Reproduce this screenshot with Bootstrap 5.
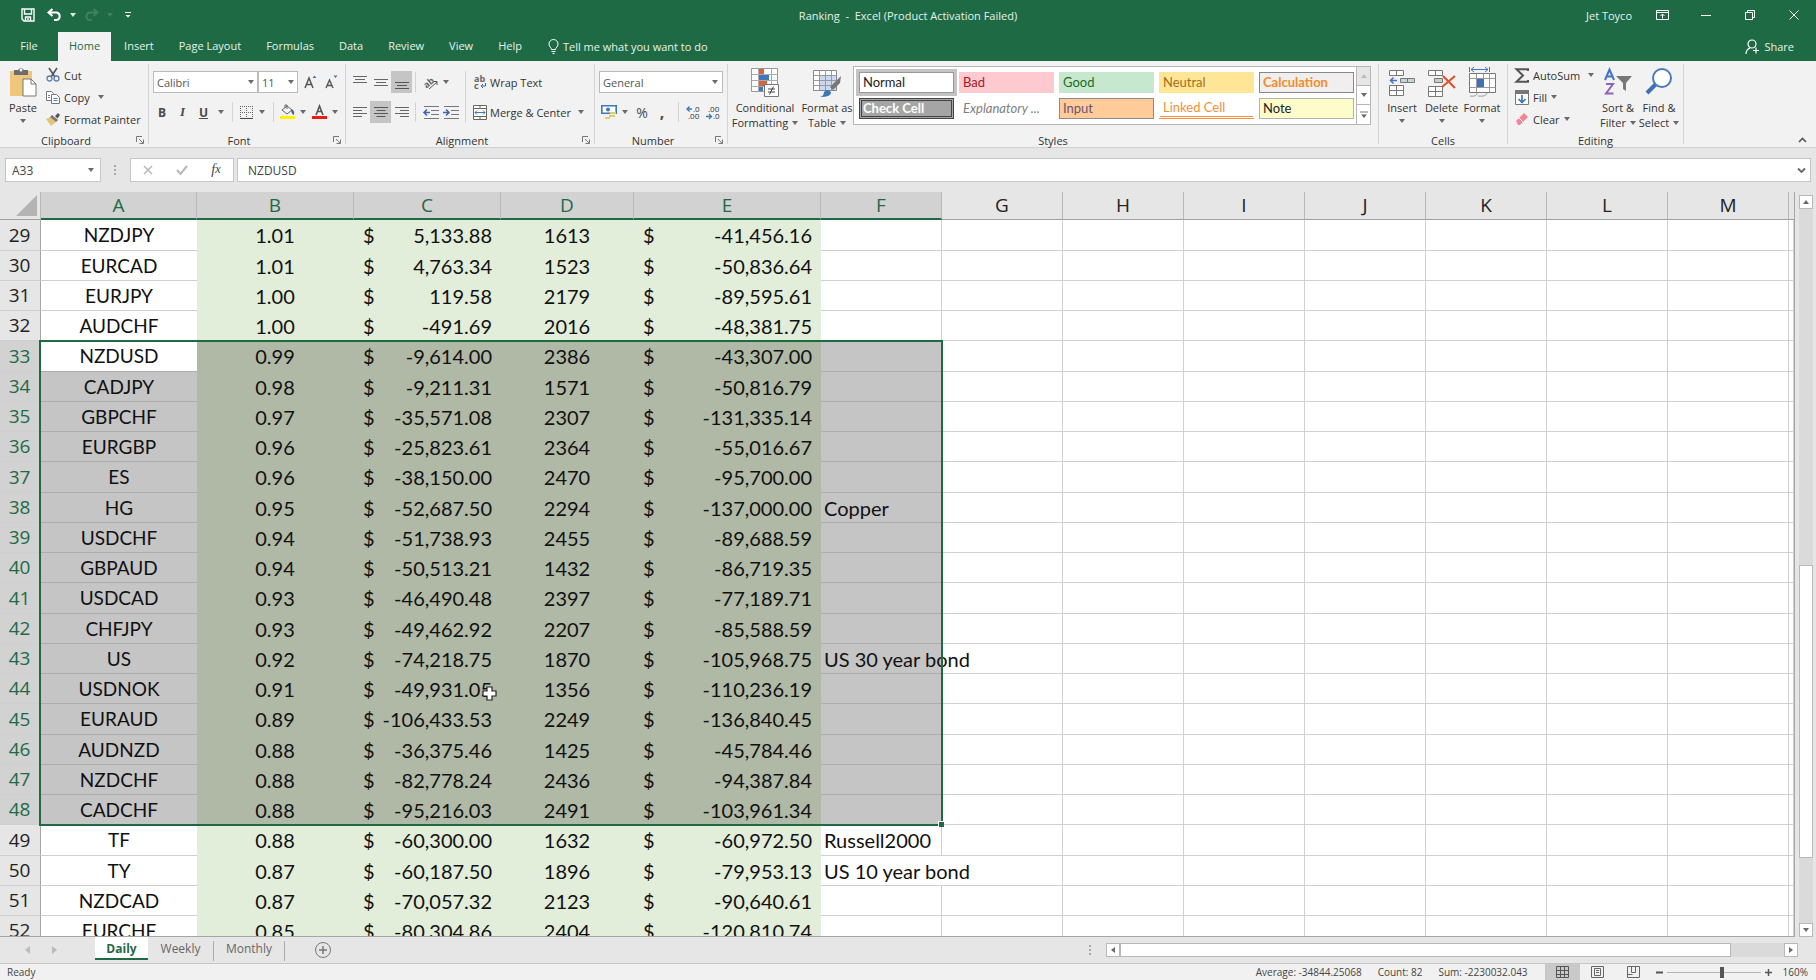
<!DOCTYPE html>
<html lang="en">
<head>
<meta charset="utf-8">
<meta name="viewport" content="width=device-width, initial-scale=1">
<title>Ranking - Excel</title>
<link rel="stylesheet" href="https://cdn.jsdelivr.net/npm/bootstrap@5.3.0/dist/css/bootstrap.min.css">
<style>
:root{--xl:#1e6a45;--line:#c6c6c6;--ribbon:#f2f2f2;--chrome:#e6e6e6;--grid:#d0d0d0}
body{font-family:"Open Sans","Noto Sans",sans-serif;font-size:11px;line-height:15px;color:#333;background:var(--chrome)}
body>*{flex-shrink:0}
button,input,select{font:inherit;color:inherit}
button{background:none;border:0;padding:0}
svg{display:block;flex:none;overflow:visible}
.caret{width:0;height:0;border:3px solid transparent;border-top:4px solid #6a6a6a;border-bottom:0;flex:none}
/* title bar */
.titlebar{background:var(--xl);color:#e6f2eb;display:grid;grid-template-columns:1fr auto 1fr;height:32px;padding-bottom:2px}
.titlebar button{height:30px}
.winbtn{width:44px}
.menu{background:var(--xl);color:#e6f2eb;height:29px}
.menu .tab{padding:0 12px 0 13px;height:29px;color:#e6f2eb;text-decoration:none;line-height:28px}
.menu .tab.active{background:var(--ribbon);color:var(--xl);padding:0 11px}
.menu .tab.file{width:58px;padding:0;text-align:center}
/* ribbon */
.ribbon{background:var(--ribbon);height:87px;border-bottom:1px solid #d0d0d0;padding-top:3px}
.group{position:relative;height:80px;border-right:1px solid #d4d4d4}
.group-body{height:66px}
.group-name{height:18px;line-height:22px;text-align:center;color:#333}
.launch{position:absolute;right:4px;bottom:0}
.rowbtn{height:22px;gap:4px}
.tool{height:22px;flex:none;color:#4a4a4a}
.tool.on{background:#c5c5c5}
.tool.label{color:#333}
.vsep{width:1px;height:20px;background:#d4d4d4;flex:none}
.combo{position:relative}
.combo select,.combo input{appearance:none;width:100%;height:22px;border:1px solid #bbb;border-radius:0;background:#fff;padding:0 3px;display:block;color:#555}
.combo .caret{position:absolute;right:4px;top:9px;pointer-events:none}
.big{display:flex;flex-direction:column;align-items:center;white-space:nowrap;padding-top:3px}
.big svg{margin-bottom:3px}
.big .caret{margin-top:4px}
.gallery{border:1px solid #b6b6b6;background:#fff;height:59px;width:518px;margin-top:2px}
.swatches{display:grid;grid-template-columns:repeat(5,95px);gap:5px;padding:5px 1px 0 5px;grid-auto-rows:21px}
.swatch{font-family:Lato,sans-serif;font-size:13px;line-height:19px;text-align:left;padding:0 3px;border:1px solid transparent;white-space:nowrap;color:#222}
.gstrip{width:14px;border-left:1px solid #b6b6b6}
.gstrip button{height:19px;width:13px;display:flex;justify-content:center;align-items:center;border-bottom:1px solid #b6b6b6}
/* formula bar */
.fbar{padding:10px 5px;height:44px;font-size:12px;color:#444}
.fbox{background:#fff;border:1px solid var(--line);height:24px}
.fbox input{border:0;outline:0;background:none;padding:0 6px;min-width:0;width:100%}
.fbox.acts button{flex:1;display:flex;justify-content:center}
/* sheet */
.work{flex:1 1 0;min-height:0}
.sheet{min-height:0;background:#fff;border-right:1px solid #a6a6a6;border-bottom:1px solid #a6a6a6;overflow:hidden;position:relative}
.cells{table-layout:fixed;width:100%;border-collapse:separate;border-spacing:0;font-size:19px}
.cells th{font-weight:400;text-align:center;padding:0;line-height:27px;color:#222;background:var(--chrome)}
.cells thead th{height:28px;border-right:1px solid #b8b8b8;border-bottom:1px solid #a0a0a0}
.cells thead th.hit{background:#d2d2d2;color:var(--xl);border-bottom:2px solid var(--xl);line-height:26px}
.cells tbody th{border-right:1px solid #a6a6a6;border-bottom:1px solid #cfcfcf;padding-right:1px}
.cells tr.in th{background:#d2d2d2;color:var(--xl)}
.cells tbody tr{height:30px}
.cells tbody tr:nth-child(4n+1){height:31px}
.cells td{font-family:Lato,sans-serif;font-size:20px;padding:0;line-height:28px;color:#111;border-right:1px solid var(--grid);border-bottom:1px solid var(--grid);white-space:nowrap;background:#fff}
.cells td.free{background:none}
.cells td.name{text-align:center;border-right:0;font-size:19px}
.cells td.fill{background:#e2edda;border-color:#e2edda;text-align:center}
.cells td.money div{padding:0 8px 0 9px}
.cells td.note{padding-left:3px;overflow:visible;position:relative}
.cells td.spill{border-right-color:transparent}
.cells tr.in td.fill{background:#b0b8a6;border-color:#b0b8a6}
.cells tr.in td.name,.cells tr.in td.note{background:#c5c5c5;border-color:#adadad}
.cells tr.in td.name.active{background:#fff}
.range{position:absolute;left:39px;top:148px;width:904px;height:486px;border:2px solid var(--xl);z-index:3;pointer-events:none}
.range i{position:absolute;right:-3px;bottom:-3px;width:6px;height:6px;background:var(--xl);border:1px solid #fff;border-width:1px 0 0 1px}
.pointer{position:absolute;left:482px;top:494px;z-index:4}
.corner svg{margin-left:16px}
/* scroll bars and sheet tabs */
.sbtn{width:14px;height:14px;background:#fff;border:1px solid #b8b8b8;display:flex;align-items:center;justify-content:center;flex:none}
.track{background:#dadada;display:flex}
.thumb{background:#fff;border:1px solid #b8b8b8}
.tabs{height:27px;font-size:12px;border-bottom:1px solid var(--line);color:#555}
.tabs .sheet-tab{height:23px;line-height:23px;text-align:center;color:#666;text-decoration:none}
.tabs .sheet-tab.active{background:#fff;color:var(--xl);font-weight:700;border-bottom:2px solid var(--xl)}
.status{height:16px;background:#f1f1f1;color:#444;font-size:10px}
.zoomer{appearance:none;width:94px;height:14px;background:linear-gradient(#b5b5b5,#b5b5b5) center/100% 1px no-repeat;margin:0}
.zoomer::-webkit-slider-thumb{appearance:none;width:4px;height:11px;background:#555}
</style>
</head>
<body class="vh-100 d-flex flex-column overflow-hidden">

<svg width="0" height="0" class="position-absolute" aria-hidden="true"><defs>
<symbol id="launch" viewBox="0 0 8 8"><path d="M.5 6V.5H6M3 3l4 4M7.500 3.500v4h-4" fill="none" stroke="#777"/></symbol>
</defs></svg>

<header class="titlebar">
  <div class="d-flex align-items-center">
    <button style="margin-left:21px" aria-label="Save"><svg width="14" height="14" viewBox="0 0 14 14" fill="none" stroke="#fff" stroke-width="1.400"><path d="M1 1h12v12H3L1 11zM3.500 1v5h7V1M4.500 13V9h5v4M7 10v2"/></svg></button>
    <button class="d-flex align-items-center gap-2" style="margin-left:12px" aria-label="Undo"><svg width="15" height="14" viewBox="0 0 15 14" fill="none" stroke="#fff" stroke-width="2"><path d="M5.500 1 1.500 4.500l4 3.500M2 4.500h7.500a3.800 3.800 0 0 1 0 7.500H7"/></svg><span class="caret" style="border-top-color:#dcebe2"></span></button>
    <button class="d-flex align-items-center gap-2" style="margin-left:8px" aria-label="Redo"><svg width="15" height="14" viewBox="0 0 15 14" fill="none" stroke="#3f8060" stroke-width="2"><path d="m9.500 1 4 3.500-4 3.500M13 4.500H5.500a3.800 3.800 0 0 0 0 7.500H8"/></svg><span class="caret" style="border-top-color:#3f8060"></span></button>
    <button style="margin-left:11px" aria-label="Customize Quick Access Toolbar"><svg width="8" height="8" viewBox="0 0 8 8"><path d="M1 1.500h6" stroke="#fff"/><path d="M1.500 4h5L4 6.500z" fill="#fff"/></svg></button>
  </div>
  <div class="d-flex align-items-center" style="white-space:pre">Ranking  -  Excel (Product Activation Failed)</div>
  <div class="d-flex align-items-center justify-content-end">
    <span class="me-2">Jet Toyco</span>
    <button class="winbtn" aria-label="Ribbon display"><svg class="mx-auto" width="13" height="10" viewBox="0 0 13 10" fill="none" stroke="#fff"><path d="M.5.5h12v9H.5zM.5 2.500h12M6.500 8.500v-4M4.500 6l2-2 2 2"/></svg></button>
    <button class="winbtn" aria-label="Minimize"><svg class="mx-auto" width="10" height="10" viewBox="0 0 10 10"><path d="M0 5.500h10" stroke="#fff"/></svg></button>
    <button class="winbtn" aria-label="Restore"><svg class="mx-auto" width="10" height="10" viewBox="0 0 10 10" fill="none" stroke="#fff"><path d="M.5 2.500h7v7h-7zM2.500 2.500v-2h7v7h-2"/></svg></button>
    <button class="winbtn" aria-label="Close"><svg class="mx-auto" width="10" height="10" viewBox="0 0 10 10"><path d="m.5.5 9 9m0-9-9 9" stroke="#fff"/></svg></button>
  </div>
</header>

<nav class="menu d-flex">
  <a href="#" class="tab file">File</a>
  <a href="#" class="tab active">Home</a>
  <a href="#" class="tab">Insert</a><a href="#" class="tab">Page Layout</a><a href="#" class="tab">Formulas</a><a href="#" class="tab">Data</a><a href="#" class="tab">Review</a><a href="#" class="tab">View</a><a href="#" class="tab">Help</a>
  <button class="d-flex align-items-center gap-1" style="margin-left:14px"><svg width="11" height="15" viewBox="0 0 11 15" fill="none" stroke="#fff"><path d="M3.500 10.500c0-2-2.500-2.500-2.500-5.500a4.500 4.500 0 0 1 9 0c0 3-2.500 3.500-2.500 5.500zM3.500 12.500h4M4.500 14.500h2"/></svg>Tell me what you want to do</button>
  <button class="d-flex align-items-center gap-1 ms-auto" style="padding-right:22px"><svg width="15" height="15" viewBox="0 0 15 15" fill="none" stroke="#fff" stroke-width="1.200"><circle cx="7" cy="5" r="4"/><path d="M1 15c0-3 1.500-5 4-6M8 11.500h6M11 8.500v6"/></svg>Share</button>
</nav>

<section class="ribbon d-flex">
  <div class="group" style="width:149px">
    <div class="group-body d-flex">
      <button class="big" style="width:46px"><svg width="28" height="30" viewBox="0 0 28 30"><path d="M1 4h22v25H1z" fill="#efc77c"/><path d="M5 3h4a3.500 3.500 0 0 1 6 0h4v5H5z" fill="#6d6d6d"/><circle cx="12" cy="3" r="1.500" fill="#f2f2f2"/><path d="M14 12h8l5 5v12H14z" fill="#fff" stroke="#777"/><path d="M22 12v5h5" fill="none" stroke="#777"/></svg>Paste<span class="caret"></span></button>
      <div>
        <button class="rowbtn d-flex align-items-center"><svg width="14" height="14" viewBox="0 0 14 14" fill="none"><path d="m3 0 6 9M11 0 5 9" stroke="#555" stroke-width="1.600"/><circle cx="3.500" cy="10.500" r="2.500" stroke="#5b7fb5" stroke-width="1.300"/><circle cx="10.500" cy="10.500" r="2.500" stroke="#5b7fb5" stroke-width="1.300"/></svg>Cut</button>
        <button class="rowbtn d-flex align-items-center"><svg width="14" height="13" viewBox="0 0 14 13" fill="#fff" stroke="#777"><path d="M.5.5h5l2 2v7h-7z"/><path d="M5.500 3.500h5l3 3v6h-8z"/><path d="M2 4.500h2M2 6.500h2M7.500 7.500h4M7.500 9.500h4" stroke="#5b7fb5"/></svg>Copy<span class="caret ms-1"></span></button>
        <button class="rowbtn d-flex align-items-center"><svg width="14" height="13" viewBox="0 0 14 13"><path d="M0 6 4 4l6 5-5 4z" fill="#e6c477"/><path d="m4 4 2-2 6 5-2 2z" fill="#777"/><path d="m9 3 3-3 2 2-2.500 3.500z" fill="#555"/></svg>Format Painter</button>
      </div>
    </div>
    <div class="group-name" style="padding-right:16px">Clipboard</div>
    <button class="launch" aria-label="Clipboard settings"><svg width="8" height="8"><use href="#launch"/></svg></button>
  </div>

  <div class="group" style="width:197px">
    <div class="group-body" style="padding:7px 0 0 4px">
      <div class="d-flex align-items-center">
        <div class="combo" style="width:105px"><select aria-label="Font"><option>Calibri</option></select><span class="caret"></span></div>
        <div class="combo" style="width:40px"><select aria-label="Font size"><option>11</option></select><span class="caret"></span></div>
        <button class="tool" style="margin-left:6px" aria-label="Increase font size"><svg width="13" height="14" viewBox="0 0 13 14"><path d="M1 13 5 3l4 10M2.500 9.500h5" fill="none" stroke="#555" stroke-width="1.500"/><path d="M8.500 3h4l-2-2.500z" fill="#4472b8"/></svg></button>
        <button class="tool" style="margin-left:8px" aria-label="Decrease font size"><svg width="13" height="14" viewBox="0 0 13 14"><path d="m1 13 3.500-8L8 13M2.500 10.500h4" fill="none" stroke="#555" stroke-width="1.400"/><path d="M8.500.5h4l-2 2.500z" fill="#4472b8"/></svg></button>
      </div>
      <div class="d-flex align-items-center mt-2">
        <button class="tool fw-bold" style="width:18px;font-size:12px">B</button>
        <button class="tool" style="width:23px;font:italic 700 13px 'Liberation Serif',serif">I</button>
        <button class="tool fw-bold text-decoration-underline" style="width:19px;font-size:12px">U</button>
        <span class="caret" style="margin-left:5px"></span><span class="vsep" style="margin:0 7px 0 8px"></span>
        <button class="tool d-flex align-items-center" style="gap:6px" aria-label="Borders"><svg width="13" height="13" viewBox="0 0 13 13" fill="none" stroke="#666"><path d="M.5 0v12M12.500 0v12M6.500 0v12M0 .5h13M0 6.500h13" stroke-dasharray="1 1"/><path d="M0 12.500h13" stroke="#444"/></svg><span class="caret"></span></button>
        <span class="vsep ms-2" style="margin-right:6px"></span>
        <button class="tool d-flex align-items-center" style="gap:5px" aria-label="Fill color"><svg width="15" height="16" viewBox="0 0 15 16"><path d="m2 6 5-4 5 4-5 4z" fill="#f4f4f4" stroke="#666"/><path d="M5 4V1h2v4" fill="none" stroke="#666"/><path d="M11 5q4 1 3 6-3-1-3-6" fill="#4060a0"/><path d="M0 12h15v3H0z" fill="#fff200"/></svg><span class="caret"></span></button>
        <button class="tool d-flex align-items-center" style="gap:5px;margin-left:6px" aria-label="Font color"><svg width="15" height="16" viewBox="0 0 15 16"><path d="m4 11 3.500-9L11 11M5.500 7.500h4" fill="none" stroke="#555" stroke-width="1.600"/><path d="M0 12h15v3H0z" fill="#f01a0c"/></svg><span class="caret"></span></button>
      </div>
    </div>
    <div class="group-name" style="padding-right:16px">Font</div>
    <button class="launch" aria-label="Font settings"><svg width="8" height="8"><use href="#launch"/></svg></button>
  </div>

  <div class="group" style="width:249px">
    <div class="group-body d-flex" style="padding:7px 0 0 3px">
      <div>
        <div class="d-flex align-items-center">
          <button class="tool" style="width:21px" aria-label="Top align"><svg class="mx-auto" width="14" height="14" viewBox="0 0 14 14" stroke="#666"><path d="M0 1.500h14M2 4.500h10M0 7.500h14"/></svg></button>
          <button class="tool" style="width:21px" aria-label="Middle align"><svg class="mx-auto" width="14" height="14" viewBox="0 0 14 14" stroke="#666"><path d="M0 4.500h14M2 7.500h10M0 10.500h14"/></svg></button>
          <button class="tool on" style="width:21px" aria-label="Bottom align"><svg class="mx-auto" width="14" height="14" viewBox="0 0 14 14" stroke="#555"><path d="M0 7.500h14M2 10.500h10M0 13.500h14"/></svg></button>
          <span class="vsep" style="margin:0 7px 0 3px"></span>
          <button class="tool d-flex align-items-center gap-1" aria-label="Orientation"><svg width="16" height="15" viewBox="0 0 16 15"><text x="1" y="11" font-size="9" font-weight="700" fill="#666" transform="rotate(-40 6 9)">ab</text><path d="m6 14 8-7M10.500 6.500H14V10" fill="none" stroke="#555"/></svg><span class="caret"></span></button>
        </div>
        <div class="d-flex align-items-center mt-2">
          <button class="tool" style="width:21px" aria-label="Align left"><svg class="mx-auto" width="14" height="12" viewBox="0 0 14 12" stroke="#666"><path d="M0 1.500h14M0 4.500h9M0 7.500h14M0 10.500h9"/></svg></button>
          <button class="tool on" style="width:21px" aria-label="Center"><svg class="mx-auto" width="14" height="12" viewBox="0 0 14 12" stroke="#555"><path d="M0 1.500h14M2.500 4.500h9M0 7.500h14M2.500 10.500h9"/></svg></button>
          <button class="tool" style="width:21px" aria-label="Align right"><svg class="mx-auto" width="14" height="12" viewBox="0 0 14 12" stroke="#666"><path d="M0 1.500h14M5 4.500h9M0 7.500h14M5 10.500h9"/></svg></button>
          <span class="vsep" style="margin:0 7px 0 3px"></span>
          <button class="tool" aria-label="Decrease indent"><svg width="16" height="13" viewBox="0 0 16 13"><path d="M1 .5h15M8 4.500h8M8 8.500h8M1 12.500h15" stroke="#777"/><path d="M1 6.500h6M4 3.500l-3 3 3 3" fill="none" stroke="#3f66ad" stroke-width="1.600"/></svg></button>
          <button class="tool ms-1" aria-label="Increase indent"><svg width="16" height="13" viewBox="0 0 16 13"><path d="M1 .5h15M8 4.500h8M8 8.500h8M1 12.500h15" stroke="#777"/><path d="M0 6.500h6M3 3.500l3 3-3 3" fill="none" stroke="#3f66ad" stroke-width="1.600"/></svg></button>
        </div>
      </div>
      <span class="vsep" style="height:52px;margin:0 7px 0 6px"></span>
      <div>
        <button class="tool label d-flex align-items-center" style="gap:3px"><svg width="14" height="15" viewBox="0 0 14 15"><text x="1" y="7" font-size="9" font-weight="700" fill="#666">ab</text><text x="1" y="14" font-size="9" font-weight="700" fill="#666">c</text><path d="M12.500 8v3H8M10 9l-2 2 2 2" fill="none" stroke="#3f66ad"/></svg>Wrap Text</button>
        <button class="tool label d-flex align-items-center mt-2" style="gap:3px"><svg width="14" height="15" viewBox="0 0 14 15"><path d="M.5.5h13v14H.5zM.5 3.500h13M.5 11.500h13M7 .5v3M7 11.500v3" fill="#fff" stroke="#666"/><path d="M2 7.500h10M4 5.500l-2 2 2 2M10 5.500l2 2-2 2" fill="none" stroke="#3f78b8"/></svg>Merge &amp; Center<span class="caret ms-1"></span></button>
      </div>
    </div>
    <div class="group-name" style="padding-right:16px">Alignment</div>
    <button class="launch" aria-label="Alignment settings"><svg width="8" height="8"><use href="#launch"/></svg></button>
  </div>

  <div class="group" style="width:133px">
    <div class="group-body" style="padding:7px 0 0 4px">
      <div class="combo" style="width:124px"><select aria-label="Number format"><option>General</option></select><span class="caret" style="right:5px"></span></div>
      <div class="d-flex align-items-center mt-2">
        <button class="tool d-flex align-items-center" style="margin-left:2px;gap:5px" aria-label="Accounting format"><svg width="16" height="16" viewBox="0 0 16 16"><path d="M.8 1.800h14.400v7.400H.8z" fill="#fff" stroke="#3f78b8" stroke-width="1.600"/><circle cx="7" cy="5.500" r="2" fill="#3f78b8"/><path d="M9 8h6v2H9zM8 11h6v2H8zM4 13h5v2H4z" fill="#e3cc6c"/></svg><span class="caret"></span></button>
        <button class="tool" style="width:16px;font-size:14px;margin-left:6px">%</button>
        <button class="tool fw-bold" style="width:10px;font-size:16px;line-height:10px;margin-left:7px">,</button>
        <span class="vsep" style="margin:0 7px 0 11px"></span>
        <button class="tool" aria-label="Increase decimal"><svg width="14" height="15" viewBox="0 0 14 15"><path d="M1 4h5M3.500 1.500 1 4l2.500 2.500" fill="none" stroke="#3f78b8" stroke-width="1.300"/><text x="7" y="7" font-size="8" fill="#333">.0</text><text x="2" y="14" font-size="8" fill="#333">.00</text></svg></button>
        <button class="tool" style="margin-left:6px" aria-label="Decrease decimal"><svg width="14" height="15" viewBox="0 0 14 15"><text x="2" y="7" font-size="8" fill="#333">.00</text><path d="M0 11.500h5M3 9l2.500 2.500L3 14" fill="none" stroke="#3f78b8" stroke-width="1.300"/><text x="7" y="14" font-size="8" fill="#333">.0</text></svg></button>
      </div>
    </div>
    <div class="group-name" style="padding-right:16px">Number</div>
    <button class="launch" aria-label="Number settings"><svg width="8" height="8"><use href="#launch"/></svg></button>
  </div>

  <div class="group" style="width:651px">
    <div class="group-body d-flex">
      <button class="big" style="width:74px"><svg width="28" height="30" viewBox="0 0 28 30"><path d="M.5 1.500h26v23H.5z" fill="#fff" stroke="#999"/><path d="M.5 7.500h26M.5 13.500h26M.5 19.500h26M7.500 1.500v23M20.500 1.500v23" stroke="#aaa"/><path d="M8 2h5v5H8zM8 14h8v5H8z" fill="#d9643a"/><path d="M8 8h10v5H8zM8 20h4v4H8z" fill="#3f78b8"/><path d="M13.500 17.500h14v12h-14z" fill="#fff" stroke="#777"/><path d="M17 22h7M17 25h7M22.500 19.500l-4 8" stroke="#444"/></svg>Conditional<span class="d-flex align-items-center gap-1">Formatting<span class="caret m-0"></span></span></button>
      <button class="big" style="width:50px"><svg width="30" height="30" viewBox="0 0 30 30"><path d="M1.500 3.500h23v20h-23z" fill="#fff" stroke="#888"/><path d="M7 8h17v15H7z" fill="#c9daf0"/><path d="M1.500 8.500h23M1.500 13.500h23M1.500 18.500h23M7.500 3.500v20M13.500 3.500v20M19.500 3.500v20" stroke="#999"/><path d="m29 9-1 7-7 7-3-3z" fill="#777"/><path d="M8 30q4-1 4-5 3-4 7 0 1 5-11 5" fill="#3f78b8"/></svg>Format as<span class="d-flex align-items-center gap-1">Table<span class="caret m-0"></span></span></button>
      <div class="gallery d-flex ms-auto" style="margin-right:7px">
        <div class="swatches flex-grow-1">
          <button class="swatch" style="outline:3px solid #c4c4c4;border-color:#999">Normal</button>
          <button class="swatch" style="background:#ffc9d0;color:#a5201c">Bad</button>
          <button class="swatch" style="background:#c6e8cf;color:#1a6b24">Good</button>
          <button class="swatch" style="background:#ffe596;color:#a0701c">Neutral</button>
          <button class="swatch fw-bold" style="background:#f0eeee;color:#f28c28;border-color:#888">Calculation</button>
          <button class="swatch fw-bold" style="background:#a5a5a5;color:#fff;border:3px double #444;line-height:15px;padding:0 1px">Check Cell</button>
          <button class="swatch fst-italic" style="color:#7f7f7f">Explanatory ...</button>
          <button class="swatch" style="background:#ffcc99;color:#6d5175;border-color:#8b8b8b">Input</button>
          <button class="swatch" style="color:#f0913a;border-bottom:3px double #f5913a;line-height:17px">Linked Cell</button>
          <button class="swatch" style="background:#fffccc;border-color:#b2b2b2">Note</button>
        </div>
        <div class="gstrip">
          <button aria-label="Scroll up" style="background:#e6e6e6"><span class="caret" style="transform:rotate(180deg);border-top-color:#bbb"></span></button>
          <button aria-label="Scroll down"><span class="caret"></span></button>
          <button aria-label="More styles" class="border-0"><svg width="8" height="8" viewBox="0 0 8 8"><path d="M0 1h8" stroke="#777"/><path d="M1 3.500h6L4 7z" fill="#666"/></svg></button>
        </div>
      </div>
    </div>
    <div class="group-name">Styles</div>
  </div>

  <div class="group" style="width:129px">
    <div class="group-body d-flex ps-1">
      <button class="big" style="width:38px"><svg width="26" height="30" viewBox="0 0 26 30" fill="#fff" stroke="#777"><path d="M.5 3.500h14v5H.5zM7.500 3.500v5M.5 18.500h14v10H.5zM7.500 18.500v10M.5 23.500h14"/><path d="M11.500 11.500h14v4h-14zM18.500 11.500v4" fill="#c5d6d2"/><path d="M1 13.500h7M4.500 10.500l-3 3 3 3" fill="none" stroke="#4472c4" stroke-width="1.500"/></svg>Insert<span class="caret"></span></button>
      <button class="big" style="width:41px"><svg width="28" height="30" viewBox="0 0 28 30" fill="#fff" stroke="#777"><path d="M.5 3.500h14v5H.5zM7.500 3.500v5M.5 19.500h14v10H.5zM7.500 19.500v10M.5 24.500h14"/><path d="M6.500 11.500h8v4h-8z" fill="#ccc"/><path d="m15 9 12 12M27 9 14 20" stroke="#d9572f" stroke-width="2.200"/></svg>Delete<span class="caret"></span></button>
      <button class="big" style="width:40px"><svg width="28" height="30" viewBox="0 0 28 30" fill="none"><path d="M1.500 0v5M21.500 0v5M3 2.500h17M6 0 3 2.500 6 5M17 0l3 2.500L17 5" stroke="#3f78b8"/><path d="M1.500 6.500h26v19h-26z" fill="#fff" stroke="#777"/><path d="M1.500 11.500h26M1.500 20.500h26M8.500 6.500v19M15.500 6.500v5M21.500 6.500v19" stroke="#999"/><path d="M9 12h7v8H9z" fill="#3f70b5"/><path d="M2 29q7 1 7-3M10 29q8 1 9-3" stroke="#999"/></svg>Format<span class="caret"></span></button>
    </div>
    <div class="group-name">Cells</div>
  </div>

  <div class="group" style="width:176px">
    <div class="group-body d-flex" style="padding-left:7px">
      <div style="width:83px">
        <button class="rowbtn d-flex align-items-center"><svg width="14" height="15" viewBox="0 0 14 15"><path d="M13 3V1.200H1.500L8 7.500 1.500 13.800H13V12" fill="none" stroke="#555" stroke-width="2"/></svg>AutoSum<span class="caret ms-1"></span></button>
        <button class="rowbtn d-flex align-items-center"><svg width="14" height="15" viewBox="0 0 14 15"><path d="M.5.5h13v14H.5z" fill="#fff" stroke="#777"/><path d="M0 0h14v4H0z" fill="#777"/><path d="M7 5v7M3.500 9 7 12.500 10.500 9" fill="none" stroke="#3f78b8" stroke-width="1.700"/></svg>Fill<span class="caret"></span></button>
        <button class="rowbtn d-flex align-items-center"><svg width="14" height="12" viewBox="0 0 14 12"><path d="m1 8 8-8 4 4-8 8H3z" fill="#ee8796"/><path d="m4 5 4 4" stroke="#fff"/></svg>Clear<span class="caret"></span></button>
      </div>
      <button class="big" style="width:40px"><svg width="28" height="30" viewBox="0 0 28 30" fill="none"><path d="M1 13 5.500 2.500 10 13M3 9.500h5" stroke="#4472c4" stroke-width="2"/><path d="M2 17h7L2 26.500h7.500" stroke="#8a63b8" stroke-width="2"/><path d="M12 9h16l-6 7v8l-3-2v-6z" fill="#777"/></svg>Sort &amp;<span class="d-flex align-items-center gap-1">Filter<span class="caret m-0"></span></span></button>
      <button class="big" style="width:42px"><svg width="28" height="30" viewBox="0 0 28 30"><path d="m2 26 9-9" stroke="#3f70b5" stroke-width="4"/><circle cx="17" cy="11" r="9" fill="#fff" stroke="#4a7abc" stroke-width="2"/></svg>Find &amp;<span class="d-flex align-items-center gap-1">Select<span class="caret m-0"></span></span></button>
    </div>
    <div class="group-name">Editing</div>
  </div>
  <button class="ms-auto align-self-end mb-1" style="margin-right:9px" aria-label="Collapse ribbon"><svg width="9" height="6" viewBox="0 0 9 6"><path d="m1 5 3.500-3.500L8 5" fill="none" stroke="#555" stroke-width="1.600"/></svg></button>
</section>

<section class="fbar d-flex">
  <div class="fbox d-flex align-items-center" style="width:96px"><input aria-label="Name box" value="A33"><span class="caret" style="margin-right:6px"></span></div>
  <svg style="margin:6px 14px 0 13px" width="2" height="12" viewBox="0 0 2 12" fill="#aaa"><path d="M0 1h2v2H0zM0 5h2v2H0zM0 9h2v2H0z"/></svg>
  <div class="fbox acts d-flex align-items-center" style="width:104px">
    <button aria-label="Cancel"><svg width="10" height="10" viewBox="0 0 10 10"><path d="m1 1 8 8m0-8-8 8" stroke="#b8b8b8" stroke-width="1.500"/></svg></button>
    <button aria-label="Enter"><svg width="12" height="10" viewBox="0 0 12 10"><path d="m1 5 3.500 4L11 1" fill="none" stroke="#b8b8b8" stroke-width="2"/></svg></button>
    <button style="font:italic 14px 'Liberation Serif',serif" aria-label="Insert function">f<small>x</small></button>
  </div>
  <div class="fbox d-flex align-items-center flex-grow-1" style="margin-left:3px"><input aria-label="Formula" value="NZDUSD" style="padding-left:10px"><svg class="me-1" width="9" height="7" viewBox="0 0 9 7"><path d="m1 1.500 3.500 3.500L8 1.500" fill="none" stroke="#666" stroke-width="1.800"/></svg></div>
</section>

<main class="work d-flex">
  <div class="sheet flex-grow-1">
    <table class="cells">
      <colgroup><col style="width:41px"><col style="width:156px"><col style="width:157px"><col style="width:147px"><col style="width:133px"><col style="width:187px"><col style="width:121px"><col style="width:121px"><col style="width:121px"><col style="width:121px"><col style="width:121px"><col style="width:121px"><col style="width:121px"><col style="width:121px"><col></colgroup>
      <thead><tr><th class="corner"><svg width="21" height="21" viewBox="0 0 21 21"><path d="M21 0v21H0z" fill="#b4b4b4"/></svg></th><th class="hit">A</th><th class="hit">B</th><th class="hit">C</th><th class="hit">D</th><th class="hit">E</th><th class="hit">F</th><th>G</th><th>H</th><th>I</th><th>J</th><th>K</th><th>L</th><th>M</th><th class="border-end-0"></th></tr></thead>
      <tbody id="rows"></tbody>
    </table>
    <div class="range"><i></i></div>
    <svg class="pointer" width="15" height="15" viewBox="0 0 15 15"><path d="M5 1h5v4h4v5h-4v4H5v-4H1V5h4z" fill="#fff" stroke="#222" stroke-width="1.200"/></svg>
  </div>
  <div class="d-flex flex-column" style="width:14px;margin:3px 3px 0 4px">
    <button class="sbtn" aria-label="Scroll up"><span class="caret" style="transform:rotate(180deg)"></span></button>
    <div class="track flex-grow-1 flex-column"><div style="flex:358"></div><div class="thumb" style="flex:293"></div><div style="flex:65"></div></div>
    <button class="sbtn" aria-label="Scroll down"><span class="caret"></span></button>
  </div>
</main>

<section class="tabs d-flex">
  <div class="d-flex align-items-center" style="width:95px;padding-left:25px;gap:22px">
    <button aria-label="Previous sheet"><svg width="5" height="8" viewBox="0 0 5 8"><path d="M5 0v8L0 4z" fill="#bbb"/></svg></button>
    <button aria-label="Next sheet"><svg width="5" height="8" viewBox="0 0 5 8"><path d="M0 0v8l5-4z" fill="#bbb"/></svg></button>
  </div>
  <a href="#" class="sheet-tab active" style="width:53px">Daily</a>
  <a href="#" class="sheet-tab" style="width:65px">Weekly</a><span class="vsep mt-1" style="background:#aaa"></span>
  <a href="#" class="sheet-tab" style="width:70px">Monthly</a><span class="vsep mt-1" style="background:#aaa"></span>
  <button style="margin-left:30px" aria-label="New sheet"><svg width="16" height="16" viewBox="0 0 16 16" fill="none" stroke="#777"><circle cx="8" cy="8" r="7.500"/><path d="M8 4v8M4 8h8" stroke-width="1.500"/></svg></button>
  <div class="ms-auto d-flex align-items-center" style="width:709px;margin-right:18px">
    <svg style="margin-right:15px" width="2" height="12" viewBox="0 0 2 12" fill="#aaa"><path d="M0 1h2v2H0zM0 5h2v2H0zM0 9h2v2H0z"/></svg>
    <button class="sbtn" aria-label="Scroll left"><span class="caret" style="transform:rotate(90deg)"></span></button>
    <div class="track flex-grow-1" style="height:14px"><div class="thumb" style="width:92%"></div></div>
    <button class="sbtn" aria-label="Scroll right"><span class="caret" style="transform:rotate(-90deg)"></span></button>
  </div>
</section>

<footer class="status d-flex align-items-center">
  <span style="margin-left:7px">Ready</span>
  <span class="ms-auto">Average: -34844.25068</span><span class="ms-3">Count: 82</span><span class="ms-3">Sum: -2230032.043</span>
  <button style="width:35px;height:16px;background:#c9c9c9;margin-left:17px" aria-label="Normal view"><svg class="mx-auto" width="13" height="12" viewBox="0 0 13 12" fill="none" stroke="#555"><path d="M.5.5h12v11H.5zM4.500.5v11M8.500.5v11M.5 4.500h12M.5 8.500h12"/></svg></button>
  <button style="width:36px" aria-label="Page layout view"><svg class="mx-auto" width="13" height="12" viewBox="0 0 13 12" fill="none" stroke="#666"><path d="M.5.5h12v11H.5zM3.500 2.500h6v7h-6zM5 4.500h3M5 6.500h3"/></svg></button>
  <button style="width:36px" aria-label="Page break view"><svg class="mx-auto" width="13" height="12" viewBox="0 0 13 12" fill="none" stroke="#666"><path d="M.5.5h12v11H.5zM4.500.5v6h4v-6M.5 8.500h5"/></svg></button>
  <button style="margin-left:4px" aria-label="Zoom out"><svg width="7" height="7" viewBox="0 0 7 7"><path d="M0 3.500h7" stroke="#555" stroke-width="2"/></svg></button>
  <input type="range" class="zoomer mx-1" min="0" max="100" value="59" aria-label="Zoom">
  <button aria-label="Zoom in"><svg width="7" height="7" viewBox="0 0 7 7"><path d="M0 3.500h7M3.500 0v7" stroke="#555" stroke-width="1.500"/></svg></button>
  <span style="margin:0 8px 0 11px">160%</span>
</footer>

<script>
const data = [
 ['NZDJPY','1.01','5,133.88',1613,'-41,456.16'],['EURCAD','1.01','4,763.34',1523,'-50,836.64'],
 ['EURJPY','1.00','119.58',2179,'-89,595.61'],['AUDCHF','1.00','-491.69',2016,'-48,381.75'],
 ['NZDUSD','0.99','-9,614.00',2386,'-43,307.00'],['CADJPY','0.98','-9,211.31',1571,'-50,816.79'],
 ['GBPCHF','0.97','-35,571.08',2307,'-131,335.14'],['EURGBP','0.96','-25,823.61',2364,'-55,016.67'],
 ['ES','0.96','-38,150.00',2470,'-95,700.00'],['HG','0.95','-52,687.50',2294,'-137,000.00','Copper'],
 ['USDCHF','0.94','-51,738.93',2455,'-89,688.59'],['GBPAUD','0.94','-50,513.21',1432,'-86,719.35'],
 ['USDCAD','0.93','-46,490.48',2397,'-77,189.71'],['CHFJPY','0.93','-49,462.92',2207,'-85,588.59'],
 ['US','0.92','-74,218.75',1870,'-105,968.75','US 30 year bond'],['USDNOK','0.91','-49,931.05',1356,'-110,236.19'],
 ['EURAUD','0.89','-106,433.53',2249,'-136,840.45'],['AUDNZD','0.88','-36,375.46',1425,'-45,784.46'],
 ['NZDCHF','0.88','-82,778.24',2436,'-94,387.84'],['CADCHF','0.88','-95,216.03',2491,'-103,961.34'],
 ['TF','0.88','-60,300.00',1632,'-60,972.50','Russell2000'],['TY','0.87','-60,187.50',1896,'-79,953.13','US 10 year bond'],
 ['NZDCAD','0.87','-70,057.32',2123,'-90,640.61'],['EURCHF','0.85','-80,304.86',2404,'-120,810.74']];
const money = v => `<td class="fill money"><div class="d-flex justify-content-between"><span>$</span><span>${v}</span></div></td>`;
document.getElementById('rows').innerHTML = data.map(([name, pf, net, n, dd, note = ''], i) => {
  const row = 29 + i, inside = row >= 33 && row <= 48;
  return `<tr class="${inside ? 'in' : ''}"><th scope="row">${row}</th><td class="name ${row === 33 ? 'active' : ''}">${name}</td>` +
    `<td class="fill">${pf}</td>${money(net)}<td class="fill">${n}</td>${money(dd)}` +
    `<td class="note ${note.length > 12 ? 'spill' : ''}">${note}</td>${'<td class="free"></td>'.repeat(8)}</tr>`;
}).join('');
</script>
<script src="https://cdn.jsdelivr.net/npm/bootstrap@5.3.0/dist/js/bootstrap.bundle.min.js"></script>
</body>
</html>
